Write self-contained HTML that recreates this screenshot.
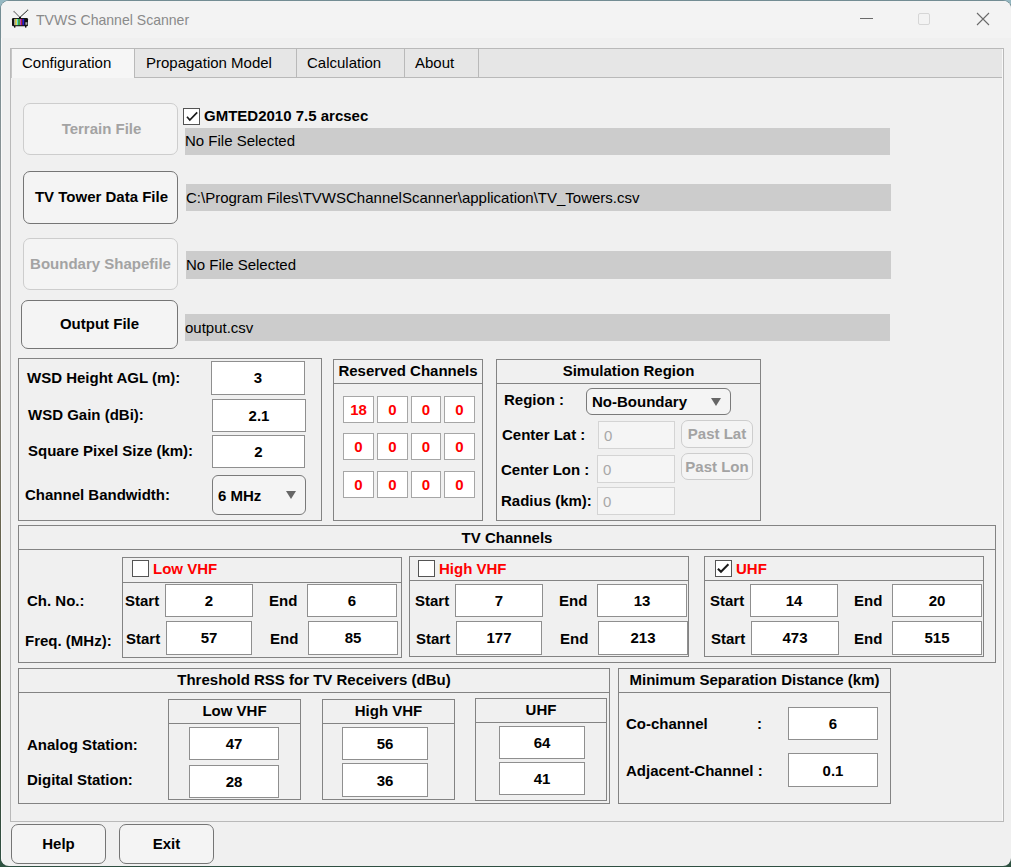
<!DOCTYPE html>
<html><head><meta charset="utf-8"><style>
html,body{margin:0;padding:0;}
body{width:1011px;height:867px;overflow:hidden;position:relative;background:linear-gradient(to bottom,#95b8c2 0,#8fb2bb 45%,#2e5340 80%,#2d5240 100%);font-family:"Liberation Sans",sans-serif;}
.win{position:absolute;left:1px;top:1px;width:1010px;height:865px;background:#f0f0f0;border-radius:8px;overflow:hidden;}
.a{position:absolute;box-sizing:border-box;}
.t{position:absolute;white-space:nowrap;line-height:17px;font-size:15px;}
</style></head><body>
<div style="position:absolute;left:0;top:0;width:1012px;height:867px;border-radius:9px;background:linear-gradient(to bottom,#728c93 0,#8a9294 20%,#929090 35%,#6a6650 60%,#3f4a38 85%,#2f4f42 100%);"></div>
<div class="win" style="box-shadow:inset 1px 1px 0 #f9f9f9"><div style="position:absolute;left:-1px;top:-1px;width:1011px;height:867px;">
<div class="a" style="left:0px;top:0px;width:1011px;height:38px;background:#f3f3f3"></div>
<div class="a" style="left:11px;top:49px;width:991px;height:28px;background:#e6e6e6"></div>
<div class="a" style="left:10px;top:48px;width:994px;height:774px;border:1px solid #b9b9b9;background:transparent;border-radius:0px;"></div>
<div class="a" style="left:11px;top:77px;width:991px;height:1px;background:#b9b9b9"></div>
<div class="a" style="left:1002px;top:49px;width:1px;height:772px;background:#f8f8f8"></div>
<div class="a" style="left:11px;top:49px;width:124px;height:29px;background:#f6f6f6"></div>
<div class="a" style="left:134px;top:48px;width:1px;height:30px;background:#b9b9b9"></div>
<div class="a" style="left:11px;top:49px;width:1px;height:29px;background:#c6c6c6"></div>
<div class="a" style="left:296px;top:48px;width:1px;height:30px;background:#b9b9b9"></div>
<div class="a" style="left:404px;top:48px;width:1px;height:30px;background:#b9b9b9"></div>
<div class="a" style="left:478px;top:48px;width:1px;height:30px;background:#b9b9b9"></div>
<div class="t" style="left:22px;top:54px;font-weight:normal;color:#000;font-size:15px;">Configuration</div>
<div class="t" style="left:146px;top:54px;font-weight:normal;color:#000;font-size:15px;">Propagation Model</div>
<div class="t" style="left:307px;top:54px;font-weight:normal;color:#000;font-size:15px;">Calculation</div>
<div class="t" style="left:415px;top:54px;font-weight:normal;color:#000;font-size:15px;">About</div>
<div class="t" style="left:36px;top:11px;font-weight:normal;color:#8a8a8a;font-size:15px;transform:scaleX(0.937);transform-origin:0 0;">TVWS Channel Scanner</div>
<svg class="a" style="left:8px;top:6px" width="24" height="24" viewBox="0 0 24 24">
<path d="M6.2 5.6 L11.9 11.4" fill="none" stroke="#555" stroke-width="1"/>
<path d="M19.6 4.3 L11.9 11.4" fill="none" stroke="#222" stroke-width="1"/>
<circle cx="6.2" cy="5.6" r="0.9" fill="#999"/>
<circle cx="19.6" cy="4.3" r="0.8" fill="#666"/>
<rect x="11" y="11" width="2" height="1.5" fill="#111"/>
<rect x="4" y="12" width="16" height="8.2" rx="1.2" fill="#111"/>
<rect x="6.3" y="12.9" width="0.9" height="6.3" fill="#d8d8d8"/>
<rect x="7.2" y="12.9" width="1.8" height="6.3" fill="#e2dc5c"/>
<rect x="9" y="12.9" width="1.3" height="6.3" fill="#55d8d8"/>
<rect x="10.3" y="12.9" width="1.5" height="6.3" fill="#4cc84c"/>
<rect x="12" y="12.9" width="1.3" height="6.3" fill="#b03ad0"/>
<rect x="13.3" y="12.9" width="1.1" height="6.3" fill="#e03030"/>
<rect x="14.4" y="12.9" width="1.8" height="6.3" fill="#2222d0"/>
<rect x="17.4" y="16.2" width="2" height="2.6" fill="#aaa"/>
<rect x="6" y="20" width="1.4" height="1.6" fill="#111"/>
<rect x="17" y="20" width="1.4" height="1.6" fill="#111"/>
</svg>
<div class="a" style="left:860px;top:18px;width:13px;height:1px;background:#6a6a6a"></div>
<div class="a" style="left:918px;top:13px;width:12px;height:12px;border:1px solid #d6d6d6;background:transparent;border-radius:2px;"></div>
<svg class="a" style="left:976px;top:12px" width="14" height="14" viewBox="0 0 14 14"><path d="M1 1 L13 13 M13 1 L1 13" stroke="#6a6a6a" stroke-width="1.1"/></svg>
<div class="a" style="left:23px;top:103px;width:155px;height:52px;border:1px solid #cdcdcd;background:#f4f4f4;border-radius:7px;"></div>
<div class="t" style="left:24px;width:155px;text-align:center;top:120px;font-weight:bold;color:#a3a3a3;font-size:15px;">Terrain File</div>
<div class="a" style="left:183px;top:108px;width:17px;height:17px;border:1px solid #545454;background:#fff;border-radius:0px;"></div>
<svg class="a" style="left:183px;top:108px" width="17" height="17" viewBox="0 0 17 17"><path d="M4 8.8 L6.8 12 L14.2 4.3" fill="none" stroke="#1a1a1a" stroke-width="1.7"/></svg>
<div class="t" style="left:204px;top:107px;font-weight:bold;color:#000;font-size:15px;">GMTED2010 7.5 arcsec</div>
<div class="a" style="left:185px;top:128px;width:705px;height:27px;background:#cccccc"></div>
<div class="t" style="left:185px;top:132px;font-weight:normal;color:#000;font-size:15px;">No File Selected</div>
<div class="a" style="left:23px;top:171px;width:155px;height:53px;border:1px solid #757575;background:#f4f4f4;border-radius:7px;"></div>
<div class="t" style="left:24px;width:155px;text-align:center;top:188px;font-weight:bold;color:#000;font-size:15px;">TV Tower Data File</div>
<div class="a" style="left:186px;top:184px;width:705px;height:27px;background:#cccccc"></div>
<div class="t" style="left:186px;top:189px;font-weight:normal;color:#000;font-size:15px;">C:\Program Files\TVWSChannelScanner\application\TV_Towers.csv</div>
<div class="a" style="left:23px;top:238px;width:155px;height:52px;border:1px solid #cdcdcd;background:#f4f4f4;border-radius:7px;"></div>
<div class="t" style="left:23px;width:155px;text-align:center;top:255px;font-weight:bold;color:#a3a3a3;font-size:15px;">Boundary Shapefile</div>
<div class="a" style="left:186px;top:251px;width:705px;height:28px;background:#cccccc"></div>
<div class="t" style="left:186px;top:256px;font-weight:normal;color:#000;font-size:15px;">No File Selected</div>
<div class="a" style="left:21px;top:300px;width:157px;height:49px;border:1px solid #757575;background:#f4f4f4;border-radius:7px;"></div>
<div class="t" style="left:21px;width:157px;text-align:center;top:315px;font-weight:bold;color:#000;font-size:15px;">Output File</div>
<div class="a" style="left:185px;top:314px;width:705px;height:27px;background:#cccccc"></div>
<div class="t" style="left:185px;top:319px;font-weight:normal;color:#000;font-size:15px;">output.csv</div>
<div class="a" style="left:18px;top:358px;width:304px;height:163px;border:1px solid #838383;background:#f0f0f0;border-radius:0px;"></div>
<div class="t" style="left:27px;top:369px;font-weight:bold;color:#000;font-size:15px;">WSD Height AGL (m):</div>
<div class="t" style="left:28px;top:406px;font-weight:bold;color:#000;font-size:15px;">WSD Gain (dBi):</div>
<div class="t" style="left:28px;top:442px;font-weight:bold;color:#000;font-size:15px;">Square Pixel Size (km):</div>
<div class="t" style="left:25px;top:486px;font-weight:bold;color:#000;font-size:15px;">Channel Bandwidth:</div>
<div class="a" style="left:211px;top:361px;width:94px;height:34px;border:1px solid #8f8f8f;background:#fff;border-radius:0px;"></div>
<div class="t" style="left:211px;width:94px;text-align:center;top:369px;font-weight:bold;color:#000;font-size:15px;">3</div>
<div class="a" style="left:212px;top:399px;width:94px;height:33px;border:1px solid #8f8f8f;background:#fff;border-radius:0px;"></div>
<div class="t" style="left:212px;width:94px;text-align:center;top:407px;font-weight:bold;color:#000;font-size:15px;">2.1</div>
<div class="a" style="left:212px;top:435px;width:93px;height:33px;border:1px solid #8f8f8f;background:#fff;border-radius:0px;"></div>
<div class="t" style="left:212px;width:93px;text-align:center;top:443px;font-weight:bold;color:#000;font-size:15px;">2</div>
<div class="a" style="left:212px;top:475px;width:94px;height:40px;border:1px solid #7a7a7a;background:#f4f4f4;border-radius:6px;"></div>
<div class="t" style="left:218px;top:487px;font-weight:bold;color:#000;font-size:15px;">6 MHz</div>
<svg class="a" style="left:286px;top:491px" width="10" height="8" viewBox="0 0 10 8"><path d="M0 0 L10 0 L5.0 8 Z" fill="#666"/></svg>
<div class="a" style="left:333px;top:359px;width:150px;height:162px;border:1px solid #838383;background:#f0f0f0;border-radius:0px;"></div>
<div class="a" style="left:333px;top:383px;width:150px;height:1px;background:#838383"></div>
<div class="t" style="left:333px;width:150px;text-align:center;top:362px;font-weight:bold;color:#000;font-size:15px;">Reserved Channels</div>
<div class="a" style="left:343px;top:396px;width:31px;height:27px;border:1px solid #a6a6a6;background:#fff;border-radius:0px;"></div>
<div class="t" style="left:343px;width:31px;text-align:center;top:401px;font-weight:bold;color:#ff0000;font-size:15px;">18</div>
<div class="a" style="left:377px;top:396px;width:31px;height:27px;border:1px solid #a6a6a6;background:#fff;border-radius:0px;"></div>
<div class="t" style="left:377px;width:31px;text-align:center;top:401px;font-weight:bold;color:#ff0000;font-size:15px;">0</div>
<div class="a" style="left:411px;top:396px;width:30px;height:27px;border:1px solid #a6a6a6;background:#fff;border-radius:0px;"></div>
<div class="t" style="left:411px;width:30px;text-align:center;top:401px;font-weight:bold;color:#ff0000;font-size:15px;">0</div>
<div class="a" style="left:444px;top:396px;width:31px;height:27px;border:1px solid #a6a6a6;background:#fff;border-radius:0px;"></div>
<div class="t" style="left:444px;width:31px;text-align:center;top:401px;font-weight:bold;color:#ff0000;font-size:15px;">0</div>
<div class="a" style="left:343px;top:433px;width:31px;height:27px;border:1px solid #a6a6a6;background:#fff;border-radius:0px;"></div>
<div class="t" style="left:343px;width:31px;text-align:center;top:438px;font-weight:bold;color:#ff0000;font-size:15px;">0</div>
<div class="a" style="left:377px;top:433px;width:31px;height:27px;border:1px solid #a6a6a6;background:#fff;border-radius:0px;"></div>
<div class="t" style="left:377px;width:31px;text-align:center;top:438px;font-weight:bold;color:#ff0000;font-size:15px;">0</div>
<div class="a" style="left:411px;top:433px;width:30px;height:27px;border:1px solid #a6a6a6;background:#fff;border-radius:0px;"></div>
<div class="t" style="left:411px;width:30px;text-align:center;top:438px;font-weight:bold;color:#ff0000;font-size:15px;">0</div>
<div class="a" style="left:444px;top:433px;width:31px;height:27px;border:1px solid #a6a6a6;background:#fff;border-radius:0px;"></div>
<div class="t" style="left:444px;width:31px;text-align:center;top:438px;font-weight:bold;color:#ff0000;font-size:15px;">0</div>
<div class="a" style="left:343px;top:471px;width:31px;height:27px;border:1px solid #a6a6a6;background:#fff;border-radius:0px;"></div>
<div class="t" style="left:343px;width:31px;text-align:center;top:476px;font-weight:bold;color:#ff0000;font-size:15px;">0</div>
<div class="a" style="left:377px;top:471px;width:31px;height:27px;border:1px solid #a6a6a6;background:#fff;border-radius:0px;"></div>
<div class="t" style="left:377px;width:31px;text-align:center;top:476px;font-weight:bold;color:#ff0000;font-size:15px;">0</div>
<div class="a" style="left:411px;top:471px;width:30px;height:27px;border:1px solid #a6a6a6;background:#fff;border-radius:0px;"></div>
<div class="t" style="left:411px;width:30px;text-align:center;top:476px;font-weight:bold;color:#ff0000;font-size:15px;">0</div>
<div class="a" style="left:444px;top:471px;width:31px;height:27px;border:1px solid #a6a6a6;background:#fff;border-radius:0px;"></div>
<div class="t" style="left:444px;width:31px;text-align:center;top:476px;font-weight:bold;color:#ff0000;font-size:15px;">0</div>
<div class="a" style="left:496px;top:359px;width:265px;height:162px;border:1px solid #838383;background:#f0f0f0;border-radius:0px;"></div>
<div class="a" style="left:496px;top:383px;width:265px;height:1px;background:#838383"></div>
<div class="t" style="left:496px;width:265px;text-align:center;top:362px;font-weight:bold;color:#000;font-size:15px;">Simulation Region</div>
<div class="t" style="left:504px;top:391px;font-weight:bold;color:#000;font-size:15px;">Region :</div>
<div class="a" style="left:586px;top:388px;width:145px;height:27px;border:1px solid #7a7a7a;background:#f4f4f4;border-radius:6px;"></div>
<div class="t" style="left:592px;top:393px;font-weight:bold;color:#000;font-size:15px;">No-Boundary</div>
<svg class="a" style="left:711px;top:398px" width="10" height="8" viewBox="0 0 10 8"><path d="M0 0 L10 0 L5.0 8 Z" fill="#666"/></svg>
<div class="t" style="left:502px;top:426px;font-weight:bold;color:#000;font-size:15px;">Center Lat :</div>
<div class="t" style="left:501px;top:461px;font-weight:bold;color:#000;font-size:15px;">Center Lon :</div>
<div class="t" style="left:501px;top:492px;font-weight:bold;color:#000;font-size:15px;">Radius (km):</div>
<div class="a" style="left:598px;top:421px;width:77px;height:28px;border:1px solid #d4d4d4;background:#f5f5f5;border-radius:0px;"></div>
<div class="t" style="left:604px;top:427px;font-weight:normal;color:#a8a8a8;font-size:15px;">0</div>
<div class="a" style="left:597px;top:455px;width:78px;height:28px;border:1px solid #d4d4d4;background:#f5f5f5;border-radius:0px;"></div>
<div class="t" style="left:603px;top:461px;font-weight:normal;color:#a8a8a8;font-size:15px;">0</div>
<div class="a" style="left:597px;top:487px;width:78px;height:28px;border:1px solid #d4d4d4;background:#f5f5f5;border-radius:0px;"></div>
<div class="t" style="left:603px;top:493px;font-weight:normal;color:#a8a8a8;font-size:15px;">0</div>
<div class="a" style="left:681px;top:420px;width:72px;height:28px;border:1px solid #cdcdcd;background:#f4f4f4;border-radius:7px;"></div>
<div class="t" style="left:681px;width:72px;text-align:center;top:425px;font-weight:bold;color:#a3a3a3;font-size:15px;">Past Lat</div>
<div class="a" style="left:681px;top:453px;width:72px;height:27px;border:1px solid #cdcdcd;background:#f4f4f4;border-radius:7px;"></div>
<div class="t" style="left:681px;width:72px;text-align:center;top:458px;font-weight:bold;color:#a3a3a3;font-size:15px;">Past Lon</div>
<div class="a" style="left:18px;top:525px;width:978px;height:138px;border:1px solid #838383;background:#f0f0f0;border-radius:0px;"></div>
<div class="a" style="left:18px;top:549px;width:978px;height:1px;background:#838383"></div>
<div class="t" style="left:18px;width:978px;text-align:center;top:529px;font-weight:bold;color:#000;font-size:15px;">TV Channels</div>
<div class="t" style="left:27px;top:592px;font-weight:bold;color:#000;font-size:15px;">Ch. No.:</div>
<div class="t" style="left:25px;top:632px;font-weight:bold;color:#000;font-size:15px;">Freq. (MHz):</div>
<div class="a" style="left:122px;top:557px;width:280px;height:101px;border:1px solid #838383;background:#f0f0f0;border-radius:0px;"></div>
<div class="a" style="left:122px;top:582px;width:280px;height:1px;background:#838383"></div>
<div class="a" style="left:132px;top:560px;width:17px;height:17px;border:1px solid #545454;background:#fff;border-radius:0px;"></div>
<div class="t" style="left:153px;top:560px;font-weight:bold;color:#ff0000;font-size:15px;">Low VHF</div>
<div class="t" style="left:125px;top:592px;font-weight:bold;color:#000;font-size:15px;">Start</div>
<div class="t" style="left:126px;top:630px;font-weight:bold;color:#000;font-size:15px;">Start</div>
<div class="t" style="left:269px;top:592px;font-weight:bold;color:#000;font-size:15px;">End</div>
<div class="t" style="left:270px;top:630px;font-weight:bold;color:#000;font-size:15px;">End</div>
<div class="a" style="left:165px;top:584px;width:88px;height:33px;border:1px solid #8f8f8f;background:#fff;border-radius:0px;"></div>
<div class="t" style="left:165px;width:88px;text-align:center;top:592px;font-weight:bold;color:#000;font-size:15px;">2</div>
<div class="a" style="left:166px;top:621px;width:86px;height:34px;border:1px solid #8f8f8f;background:#fff;border-radius:0px;"></div>
<div class="t" style="left:166px;width:86px;text-align:center;top:629px;font-weight:bold;color:#000;font-size:15px;">57</div>
<div class="a" style="left:307px;top:584px;width:90px;height:33px;border:1px solid #8f8f8f;background:#fff;border-radius:0px;"></div>
<div class="t" style="left:307px;width:90px;text-align:center;top:592px;font-weight:bold;color:#000;font-size:15px;">6</div>
<div class="a" style="left:308px;top:621px;width:90px;height:34px;border:1px solid #8f8f8f;background:#fff;border-radius:0px;"></div>
<div class="t" style="left:308px;width:90px;text-align:center;top:629px;font-weight:bold;color:#000;font-size:15px;">85</div>
<div class="a" style="left:409px;top:556px;width:280px;height:101px;border:1px solid #838383;background:#f0f0f0;border-radius:0px;"></div>
<div class="a" style="left:409px;top:580px;width:280px;height:1px;background:#838383"></div>
<div class="a" style="left:418px;top:560px;width:17px;height:17px;border:1px solid #545454;background:#fff;border-radius:0px;"></div>
<div class="t" style="left:439px;top:560px;font-weight:bold;color:#ff0000;font-size:15px;">High VHF</div>
<div class="t" style="left:415px;top:592px;font-weight:bold;color:#000;font-size:15px;">Start</div>
<div class="t" style="left:416px;top:630px;font-weight:bold;color:#000;font-size:15px;">Start</div>
<div class="t" style="left:559px;top:592px;font-weight:bold;color:#000;font-size:15px;">End</div>
<div class="t" style="left:560px;top:630px;font-weight:bold;color:#000;font-size:15px;">End</div>
<div class="a" style="left:455px;top:584px;width:88px;height:33px;border:1px solid #8f8f8f;background:#fff;border-radius:0px;"></div>
<div class="t" style="left:455px;width:88px;text-align:center;top:592px;font-weight:bold;color:#000;font-size:15px;">7</div>
<div class="a" style="left:456px;top:621px;width:86px;height:34px;border:1px solid #8f8f8f;background:#fff;border-radius:0px;"></div>
<div class="t" style="left:456px;width:86px;text-align:center;top:629px;font-weight:bold;color:#000;font-size:15px;">177</div>
<div class="a" style="left:597px;top:584px;width:90px;height:33px;border:1px solid #8f8f8f;background:#fff;border-radius:0px;"></div>
<div class="t" style="left:597px;width:90px;text-align:center;top:592px;font-weight:bold;color:#000;font-size:15px;">13</div>
<div class="a" style="left:598px;top:621px;width:90px;height:34px;border:1px solid #8f8f8f;background:#fff;border-radius:0px;"></div>
<div class="t" style="left:598px;width:90px;text-align:center;top:629px;font-weight:bold;color:#000;font-size:15px;">213</div>
<div class="a" style="left:704px;top:556px;width:280px;height:101px;border:1px solid #838383;background:#f0f0f0;border-radius:0px;"></div>
<div class="a" style="left:704px;top:580px;width:280px;height:1px;background:#838383"></div>
<div class="a" style="left:715px;top:560px;width:17px;height:17px;border:1px solid #545454;background:#fff;border-radius:0px;"></div>
<svg class="a" style="left:715px;top:560px" width="17" height="17" viewBox="0 0 17 17"><path d="M2.9 8.7 L6 11.8 L13.4 4.3" fill="none" stroke="#1a1a1a" stroke-width="2.0"/></svg>
<div class="t" style="left:736px;top:560px;font-weight:bold;color:#ff0000;font-size:15px;">UHF</div>
<div class="t" style="left:710px;top:592px;font-weight:bold;color:#000;font-size:15px;">Start</div>
<div class="t" style="left:711px;top:630px;font-weight:bold;color:#000;font-size:15px;">Start</div>
<div class="t" style="left:854px;top:592px;font-weight:bold;color:#000;font-size:15px;">End</div>
<div class="t" style="left:854px;top:630px;font-weight:bold;color:#000;font-size:15px;">End</div>
<div class="a" style="left:750px;top:584px;width:88px;height:33px;border:1px solid #8f8f8f;background:#fff;border-radius:0px;"></div>
<div class="t" style="left:750px;width:88px;text-align:center;top:592px;font-weight:bold;color:#000;font-size:15px;">14</div>
<div class="a" style="left:751px;top:621px;width:88px;height:34px;border:1px solid #8f8f8f;background:#fff;border-radius:0px;"></div>
<div class="t" style="left:751px;width:88px;text-align:center;top:629px;font-weight:bold;color:#000;font-size:15px;">473</div>
<div class="a" style="left:892px;top:584px;width:90px;height:33px;border:1px solid #8f8f8f;background:#fff;border-radius:0px;"></div>
<div class="t" style="left:892px;width:90px;text-align:center;top:592px;font-weight:bold;color:#000;font-size:15px;">20</div>
<div class="a" style="left:892px;top:621px;width:90px;height:34px;border:1px solid #8f8f8f;background:#fff;border-radius:0px;"></div>
<div class="t" style="left:892px;width:90px;text-align:center;top:629px;font-weight:bold;color:#000;font-size:15px;">515</div>
<div class="a" style="left:18px;top:668px;width:592px;height:136px;border:1px solid #838383;background:#f0f0f0;border-radius:0px;"></div>
<div class="a" style="left:18px;top:692px;width:592px;height:1px;background:#838383"></div>
<div class="t" style="left:18px;width:592px;text-align:center;top:671px;font-weight:bold;color:#000;font-size:15px;">Threshold RSS for TV Receivers (dBu)</div>
<div class="t" style="left:27px;top:736px;font-weight:bold;color:#000;font-size:15px;">Analog Station:</div>
<div class="t" style="left:27px;top:771px;font-weight:bold;color:#000;font-size:15px;">Digital Station:</div>
<div class="a" style="left:168px;top:699px;width:133px;height:101px;border:1px solid #838383;background:#f0f0f0;border-radius:0px;"></div>
<div class="a" style="left:168px;top:723px;width:133px;height:1px;background:#838383"></div>
<div class="t" style="left:168px;width:133px;text-align:center;top:702px;font-weight:bold;color:#000;font-size:15px;">Low VHF</div>
<div class="a" style="left:189px;top:727px;width:90px;height:33px;border:1px solid #8f8f8f;background:#fff;border-radius:0px;"></div>
<div class="t" style="left:189px;width:90px;text-align:center;top:735px;font-weight:bold;color:#000;font-size:15px;">47</div>
<div class="a" style="left:189px;top:765px;width:90px;height:33px;border:1px solid #8f8f8f;background:#fff;border-radius:0px;"></div>
<div class="t" style="left:189px;width:90px;text-align:center;top:773px;font-weight:bold;color:#000;font-size:15px;">28</div>
<div class="a" style="left:322px;top:699px;width:133px;height:101px;border:1px solid #838383;background:#f0f0f0;border-radius:0px;"></div>
<div class="a" style="left:322px;top:723px;width:133px;height:1px;background:#838383"></div>
<div class="t" style="left:322px;width:133px;text-align:center;top:702px;font-weight:bold;color:#000;font-size:15px;">High VHF</div>
<div class="a" style="left:342px;top:727px;width:86px;height:33px;border:1px solid #8f8f8f;background:#fff;border-radius:0px;"></div>
<div class="t" style="left:342px;width:86px;text-align:center;top:735px;font-weight:bold;color:#000;font-size:15px;">56</div>
<div class="a" style="left:342px;top:763px;width:86px;height:34px;border:1px solid #8f8f8f;background:#fff;border-radius:0px;"></div>
<div class="t" style="left:342px;width:86px;text-align:center;top:772px;font-weight:bold;color:#000;font-size:15px;">36</div>
<div class="a" style="left:475px;top:698px;width:132px;height:103px;border:1px solid #838383;background:#f0f0f0;border-radius:0px;"></div>
<div class="a" style="left:475px;top:722px;width:132px;height:1px;background:#838383"></div>
<div class="t" style="left:475px;width:132px;text-align:center;top:701px;font-weight:bold;color:#000;font-size:15px;">UHF</div>
<div class="a" style="left:499px;top:726px;width:86px;height:33px;border:1px solid #8f8f8f;background:#fff;border-radius:0px;"></div>
<div class="t" style="left:499px;width:86px;text-align:center;top:734px;font-weight:bold;color:#000;font-size:15px;">64</div>
<div class="a" style="left:499px;top:762px;width:86px;height:33px;border:1px solid #8f8f8f;background:#fff;border-radius:0px;"></div>
<div class="t" style="left:499px;width:86px;text-align:center;top:770px;font-weight:bold;color:#000;font-size:15px;">41</div>
<div class="a" style="left:618px;top:668px;width:273px;height:136px;border:1px solid #838383;background:#f0f0f0;border-radius:0px;"></div>
<div class="a" style="left:618px;top:692px;width:273px;height:1px;background:#838383"></div>
<div class="t" style="left:618px;width:273px;text-align:center;top:671px;font-weight:bold;color:#000;font-size:15px;">Minimum Separation Distance (km)</div>
<div class="t" style="left:626px;top:715px;font-weight:bold;color:#000;font-size:15px;">Co-channel</div>
<div class="t" style="left:757px;top:715px;font-weight:bold;color:#000;font-size:15px;">:</div>
<div class="t" style="left:626px;top:762px;font-weight:bold;color:#000;font-size:15px;">Adjacent-Channel :</div>
<div class="a" style="left:788px;top:707px;width:90px;height:33px;border:1px solid #8f8f8f;background:#fff;border-radius:0px;"></div>
<div class="t" style="left:788px;width:90px;text-align:center;top:715px;font-weight:bold;color:#000;font-size:15px;">6</div>
<div class="a" style="left:788px;top:753px;width:90px;height:34px;border:1px solid #8f8f8f;background:#fff;border-radius:0px;"></div>
<div class="t" style="left:788px;width:90px;text-align:center;top:762px;font-weight:bold;color:#000;font-size:15px;">0.1</div>
<div class="a" style="left:11px;top:824px;width:95px;height:40px;border:1px solid #757575;background:#f4f4f4;border-radius:7px;"></div>
<div class="t" style="left:11px;width:95px;text-align:center;top:835px;font-weight:bold;color:#000;font-size:15px;">Help</div>
<div class="a" style="left:119px;top:824px;width:95px;height:40px;border:1px solid #757575;background:#f4f4f4;border-radius:7px;"></div>
<div class="t" style="left:119px;width:95px;text-align:center;top:835px;font-weight:bold;color:#000;font-size:15px;">Exit</div>
</div></div>
</body></html>
